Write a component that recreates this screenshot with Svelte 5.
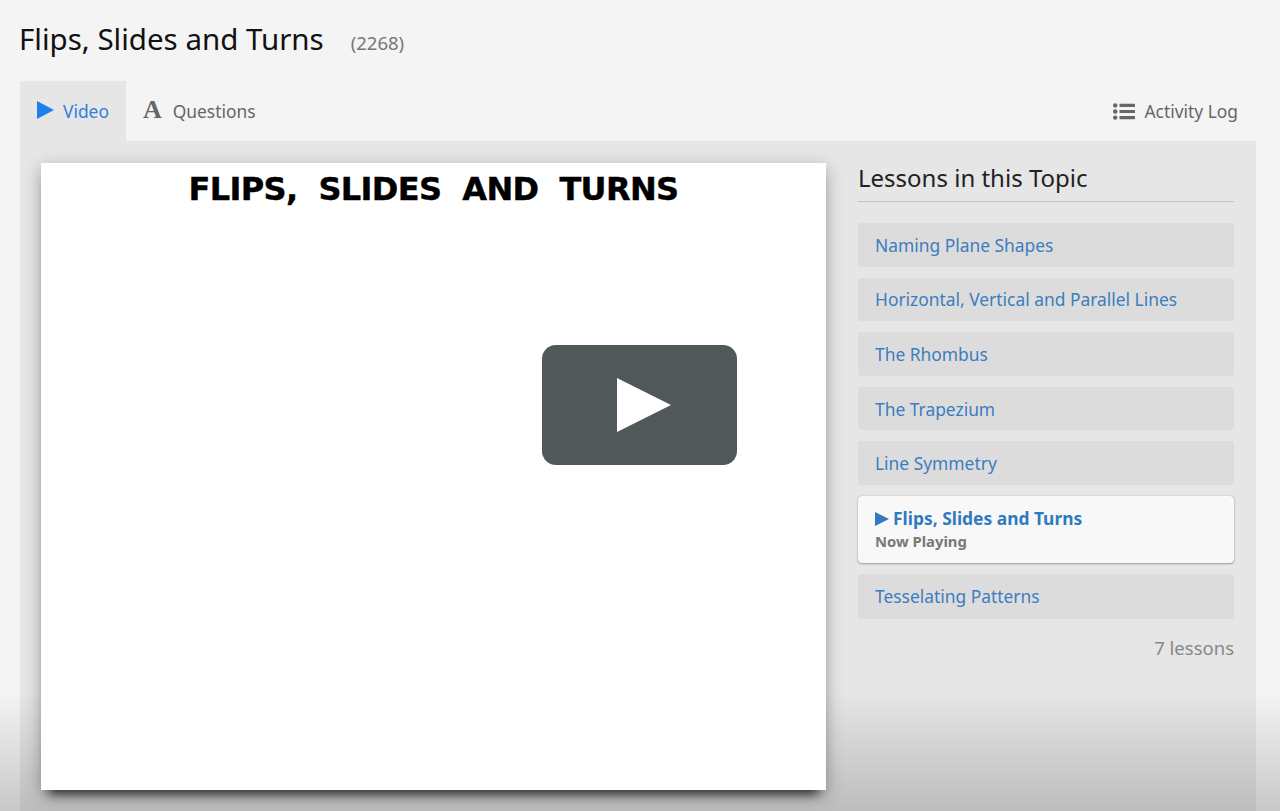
<script>
	const lessons = [
		{ title: 'Naming Plane Shapes' },
		{ title: 'Horizontal, Vertical and Parallel Lines' },
		{ title: 'The Rhombus' },
		{ title: 'The Trapezium' },
		{ title: 'Line Symmetry' },
		{ title: 'Flips, Slides and Turns', playing: true },
		{ title: 'Tesselating Patterns' }
	];
</script>

<div class="page">
	<header class="head">
		<h1>Flips, Slides and Turns</h1>
		<span class="views">(2268)</span>
	</header>

	<nav class="tabs">
		<a class="tab active" href="#video">
			<svg class="ico-play" viewBox="0 0 17 18" width="17" height="18"><path d="M0 0 L17 9 L0 18 Z" fill="currentColor" /></svg>
			Video
		</a>
		<a class="tab questions" href="#questions">
			<span class="ico-a">A</span>
			Questions
		</a>
		<a class="tab log" href="#log">
			<svg viewBox="0 0 22 17" width="22" height="17">
				<g fill="#666">
					<circle cx="2.2" cy="2.4" r="2.2" />
					<circle cx="2.2" cy="8.5" r="2.2" />
					<circle cx="2.2" cy="14.6" r="2.2" />
					<rect x="6.5" y="0.8" width="15.5" height="3.2" rx="0.5" />
					<rect x="6.5" y="6.9" width="15.5" height="3.2" rx="0.5" />
					<rect x="6.5" y="13" width="15.5" height="3.2" rx="0.5" />
				</g>
			</svg>
			Activity Log
		</a>
	</nav>

	<main class="panel">
		<section class="video">
			<div class="slide-title">FLIPS, &nbsp;SLIDES &nbsp;AND &nbsp;TURNS</div>
			<button class="big-play" aria-label="Play">
				<svg viewBox="0 0 54 54" width="54" height="54"><path d="M0 0 L54 27 L0 54 Z" fill="#fff" /></svg>
			</button>
		</section>

		<aside class="side">
			<h2>Lessons in this Topic</h2>
			<ul>
				{#each lessons as lesson}
					<li class:playing={lesson.playing}>
						{#if lesson.playing}
							<a href="#l"><span class="tri"></span>{lesson.title}</a>
							<small>Now Playing</small>
						{:else}
							<a href="#l">{lesson.title}</a>
						{/if}
					</li>
				{/each}
			</ul>
			<p class="count">7 lessons</p>
		</aside>
	</main>

	<div class="fade"></div>
</div>

<style>
	:global(body) {
		background: #f4f4f4;
		font-family: 'Noto Sans', sans-serif;
	}
	.page {
		position: relative;
		height: 811px;
		overflow: hidden;
		padding: 0 24px 0 20px;
		box-sizing: border-box;
	}
	.head {
		height: 81px;
		display: flex;
		align-items: baseline;
		gap: 27px;
		padding-top: 19px;
		margin-left: -1px;
		box-sizing: border-box;
	}
	h1 {
		margin: 0;
		font-size: 29.5px;
		font-weight: 400;
		line-height: 40px;
		color: #111;
	}
	.views {
		font-size: 18.5px;
		color: #777;
	}
	.tabs {
		display: flex;
		height: 60px;
	}
	.tab {
		display: flex;
		align-items: center;
		gap: 9px;
		padding: 0 17px;
		font-size: 17.4px;
		color: #666;
		text-decoration: none;
	}
	.tab.active {
		background: #e6e6e6;
		color: #2f80d8;
	}
	.tab.questions {
		gap: 11px;
	}
	.ico-play {
		color: #1a82ea;
		margin-top: -2px;
	}
	.ico-a {
		font-family: 'Liberation Serif', serif;
		font-weight: 700;
		font-size: 26px;
		color: #666;
		line-height: 1;
		margin-top: -2px;
	}
	.log {
		margin-left: auto;
		padding-right: 18px;
	}
	.panel {
		display: flex;
		gap: 32px;
		height: 670px;
		padding: 22px 22px 0 21px;
		background: #e6e6e6;
		box-sizing: border-box;
	}
	.video {
		position: relative;
		z-index: 1;
		flex: none;
		width: 785px;
		height: 627px;
		background: #fff;
		box-shadow: 0 5px 16px rgba(0, 0, 0, 0.3), 0 12px 10px -8px rgba(0, 0, 0, 0.7);
	}
	.slide-title {
		padding-top: 6px;
		text-align: center;
		font-family: 'DejaVu Sans', sans-serif;
		font-weight: 700;
		font-size: 32px;
		line-height: 40px;
		letter-spacing: -0.65px;
		color: #000;
		-webkit-text-stroke: 0.4px #000;
		white-space: nowrap;
	}
	.big-play {
		position: absolute;
		left: 501px;
		top: 182px;
		width: 195px;
		height: 120px;
		border: 0;
		border-radius: 14px;
		background: #505859;
		display: flex;
		align-items: center;
		justify-content: center;
		padding: 0 0 0 8px;
	}
	.side {
		flex: none;
		width: 376px;
	}
	h2 {
		margin: 0 0 21px;
		padding-bottom: 5px;
		height: 33px;
		font-size: 24px;
		font-weight: 400;
		line-height: 30px;
		color: #222;
		border-bottom: 1px solid #c4c4c4;
		box-sizing: content-box;
	}
	ul {
		list-style: none;
		margin: 0;
		padding: 0;
		display: flex;
		flex-direction: column;
		gap: 11px;
	}
	li {
		height: 43.6px;
		box-sizing: border-box;
		padding: 0 17px;
		display: flex;
		flex-direction: column;
		justify-content: center;
		background: #dcdcdc;
		border-radius: 3px;
	}
	li:last-child {
		height: 45px;
	}
	li a {
		font-size: 17.4px;
		line-height: 24px;
		color: #3d7cc0;
		text-decoration: none;
	}
	li.playing {
		height: 67px;
		background: #f8f8f8;
		border-radius: 4px;
		box-shadow: 0 0 1px rgba(0, 0, 0, 0.4), 0 1px 2px rgba(0, 0, 0, 0.3);
	}
	li.playing a {
		font-weight: 700;
		color: #2f7bbf;
	}
	.tri {
		display: inline-block;
		border-left: 14px solid #2f7bbf;
		border-top: 7.5px solid transparent;
		border-bottom: 7.5px solid transparent;
		margin-right: 4px;
		vertical-align: -1px;
	}
	small {
		font-size: 14.8px;
		line-height: 22px;
		font-weight: 700;
		color: #777;
	}
	.count {
		margin: 16px 0 0;
		text-align: right;
		font-size: 18.5px;
		line-height: 26px;
		color: #888;
	}
	.fade {
		position: absolute;
		left: 0;
		right: 0;
		bottom: 0;
		height: 120px;
		background: linear-gradient(rgba(0, 0, 0, 0), rgba(0, 0, 0, 0.18));
		pointer-events: none;
	}
</style>
